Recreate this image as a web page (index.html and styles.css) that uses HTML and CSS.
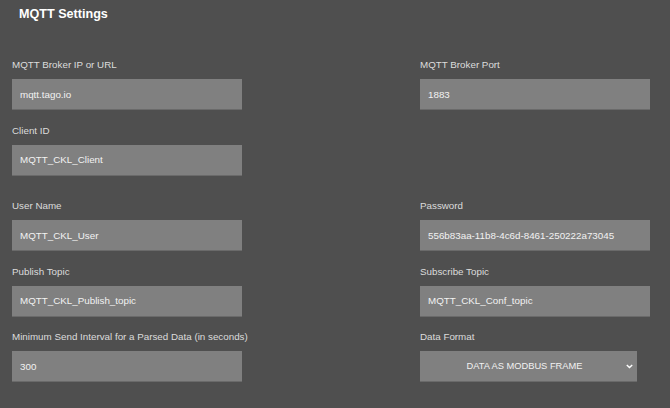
FILE: index.html
```html
<!DOCTYPE html>
<html lang="en">
<head>
<meta charset="utf-8">
<title>MQTT Settings</title>
<link rel="stylesheet" href="styles.css">
</head>
<body>
<h2 class="title">MQTT Settings</h2>
<form class="form">
  <div class="field">
    <label class="label">MQTT Broker IP or URL</label>
    <input class="input" type="text" value="mqtt.tago.io">
  </div>
  <div class="field">
    <label class="label">MQTT Broker Port</label>
    <input class="input" type="text" value="1883">
  </div>
  <div class="field section-end">
    <label class="label">Client ID</label>
    <input class="input" type="text" value="MQTT_CKL_Client">
  </div>
  <div class="field section-end"></div>
  <div class="field">
    <label class="label">User Name</label>
    <input class="input" type="text" value="MQTT_CKL_User">
  </div>
  <div class="field">
    <label class="label">Password</label>
    <input class="input" type="text" value="556b83aa-11b8-4c6d-8461-250222a73045">
  </div>
  <div class="field">
    <label class="label">Publish Topic</label>
    <input class="input" type="text" value="MQTT_CKL_Publish_topic">
  </div>
  <div class="field">
    <label class="label">Subscribe Topic</label>
    <input class="input" type="text" value="MQTT_CKL_Conf_topic">
  </div>
  <div class="field">
    <label class="label">Minimum Send Interval for a Parsed Data (in seconds)</label>
    <input class="input" type="text" value="300">
  </div>
  <div class="field">
    <label class="label">Data Format</label>
    <div class="select-wrap">
      <select class="select">
        <option>DATA AS MODBUS FRAME</option>
      </select>
      <svg class="chevron" width="7" height="5" viewBox="0 0 7 5"><path d="M0.8 0.9 L3.5 3.6 L6.2 0.9" fill="none" stroke="#ffffff" stroke-width="1.4"/></svg>
    </div>
  </div>
</form>
</body>
</html>
```
FILE: styles.css
```css
html, body {
  margin: 0;
  padding: 0;
  background: #4f4f4f;
  font-family: "Liberation Sans", Arial, sans-serif;
  height: 100%;
  overflow: hidden;
}
.title {
  margin: 0;
  padding: 5px 19px;
  font-size: 12.6px;
  line-height: 18px;
  font-weight: bold;
  color: #ffffff;
}
.form {
  display: grid;
  grid-template-columns: 230px 230px;
  column-gap: 178px;
  row-gap: 13.5px;
  padding: 30px 12px 0;
}
.field {
  display: flex;
  flex-direction: column;
}
.section-end {
  margin-bottom: 10px;
}
.label {
  display: block;
  font-size: 9.8px;
  line-height: 14px;
  color: #dcdcdc;
  margin-bottom: 7px;
  white-space: nowrap;
}
.input {
  box-sizing: border-box;
  width: 230px;
  height: 31px;
  margin: 0;
  padding: 0 8px;
  border: none;
  border-bottom: 1px solid #6a6a6a;
  background: #808080;
  color: #f2f2f2;
  font-family: "Liberation Sans", Arial, sans-serif;
  font-size: 9.8px;
  outline: none;
}
.select-wrap {
  position: relative;
  width: 217px;
}
.select {
  box-sizing: border-box;
  width: 217px;
  height: 31px;
  margin: 0;
  padding: 0 8px 0 0;
  border: none;
  border-bottom: 1px solid #6a6a6a;
  background: #808080;
  color: #f2f2f2;
  font-family: "Liberation Sans", Arial, sans-serif;
  font-size: 9.3px;
  text-align: center;
  text-align-last: center;
  -webkit-appearance: none;
  appearance: none;
  outline: none;
}
.chevron {
  position: absolute;
  right: 4px;
  top: 13px;
}
```
